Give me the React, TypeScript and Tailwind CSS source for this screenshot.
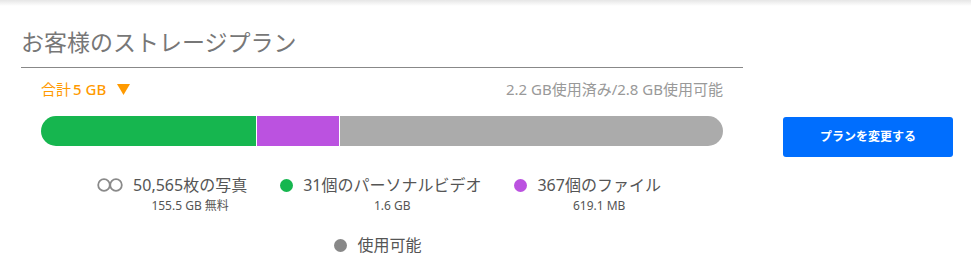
import React from 'react';

const font = { fontFamily: '"Noto Sans", "Noto Sans CJK JP", sans-serif' };

const Infinity = () => (
  <svg width="26" height="14" viewBox="0 0 26 14" fill="none">
    <circle cx="7" cy="7" r="5.8" stroke="#8a8a8a" strokeWidth="1.8" />
    <circle cx="19" cy="7" r="5.8" stroke="#8a8a8a" strokeWidth="1.8" />
  </svg>
);

const LegendItem = ({ icon, label, sub }: { icon: React.ReactNode; label: string; sub: string }) => (
  <div className="flex items-start">
    <div className="h-[22px] flex items-center mr-[10px]">{icon}</div>
    <div className="flex flex-col items-center">
      <div className="text-[16px] leading-[22px] text-[#555]">{label}</div>
      <div className="text-[12px] leading-[16px] mt-[2px] text-[#555]">{sub}</div>
    </div>
  </div>
);

export default function App() {
  return (
    <div className="w-[971px] h-[280px] bg-white overflow-hidden" style={font}>
      <div className="h-[6px] bg-gradient-to-b from-[#e6e6e6] to-white"></div>

      <div className="flex items-start pl-[21px]">
        {/* Storage panel */}
        <div className="w-[722px]">
          <div className="mt-[21px] pb-[10px] border-b border-[#888]">
            <h1 className="text-[23px] leading-[30px] text-[#777] font-normal">お客様のストレージプラン</h1>
          </div>

          <div className="px-[20px]">
            <div className="mt-[11px] h-[20px] flex items-center justify-between">
              <div className="flex items-center text-[15px] text-[#ff9a00]">
                <span>合計</span>
                <span className="ml-[2px] font-medium">5 GB</span>
                <svg className="ml-[11px]" width="13" height="11" viewBox="0 0 13 11">
                  <polygon points="0,0 13,0 6.5,11" fill="#ff9a00" />
                </svg>
              </div>
              <div className="text-[15px] text-[#999]">2.2 GB使用済み/2.8 GB使用可能</div>
            </div>

            <div className="mt-[17px] h-[30px] flex gap-[1px] rounded-full overflow-hidden bg-white">
              <div className="w-[215px] bg-[#16b64f]"></div>
              <div className="w-[82px] bg-[#bb52e0]"></div>
              <div className="flex-1 bg-[#ababab]"></div>
            </div>

            <div className="mt-[28px] flex justify-center gap-[33px] pr-[6px]">
              <LegendItem icon={<Infinity />} label="50,565枚の写真" sub="155.5 GB 無料" />
              <LegendItem
                icon={<span className="block w-[13px] h-[13px] rounded-full bg-[#16b64f]"></span>}
                label="31個のパーソナルビデオ"
                sub="1.6 GB"
              />
              <LegendItem
                icon={<span className="block w-[13px] h-[13px] rounded-full bg-[#bb52e0]"></span>}
                label="367個のファイル"
                sub="619.1 MB"
              />
            </div>

            <div className="mt-[20px] flex justify-center pr-[8px]">
              <div className="flex items-center h-[22px]">
                <span className="block w-[13px] h-[13px] rounded-full bg-[#888] mr-[10px]"></span>
                <span className="text-[16px] leading-[22px] text-[#555]">使用可能</span>
              </div>
            </div>
          </div>
        </div>

        {/* Action */}
        <button className="ml-[40px] mt-[111px] w-[170px] h-[40px] rounded-[3px] bg-[#006efe] text-white text-[12px] font-bold">
          プランを変更する
        </button>
      </div>
    </div>
  );
}
